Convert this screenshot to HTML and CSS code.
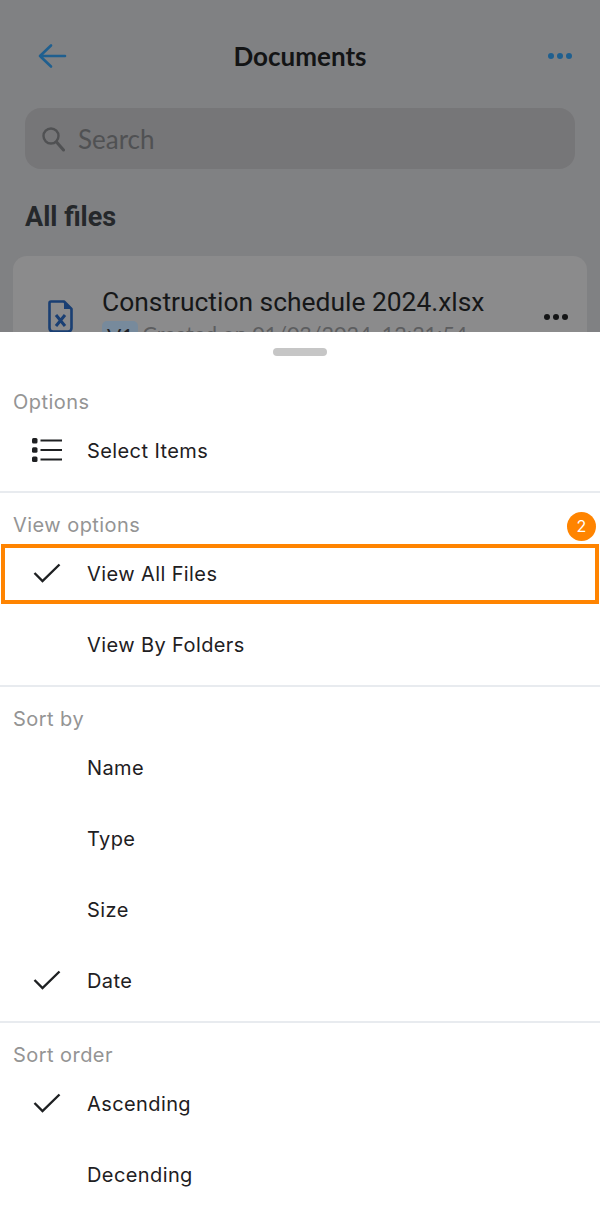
FILE: index.html
```html
<!DOCTYPE html>
<html lang="en">
<head>
<meta charset="utf-8">
<title>Documents</title>
<link rel="stylesheet" href="styles.css">
</head>
<body>
<div class="page">
  <div class="behind">
    <header class="topbar">
      <svg class="back" width="30" height="26" viewBox="0 0 30 26"><path d="M14 2.500 L3 13 L14 23.500 M3 13 H28" fill="none" stroke="#1f5f8f" stroke-width="2.600" stroke-linecap="round" stroke-linejoin="round"/></svg>
      <h1 class="title">Documents</h1>
      <svg class="more" width="26" height="8" viewBox="0 0 26 8"><circle cx="4" cy="4" r="3" fill="#1f5f8f"/><circle cx="13" cy="4" r="3" fill="#1f5f8f"/><circle cx="22" cy="4" r="3" fill="#1f5f8f"/></svg>
    </header>
    <div class="search">
      <svg width="24" height="26" viewBox="0 0 24 26"><circle cx="10" cy="10" r="7.500" fill="none" stroke="#505153" stroke-width="2.400"/><path d="M15.500 16 L22.500 24" stroke="#505153" stroke-width="3" stroke-linecap="round"/></svg>
      <span class="search-text">Search</span>
    </div>
    <h2 class="all-files">All files</h2>
    <div class="file-card">
      <svg class="file-icon" width="25" height="33" viewBox="0 0 25 33"><path d="M3 1.500 H16 L23.500 9 V28 Q23.500 31.500 20 31.500 H5 Q1.500 31.500 1.500 28 V3 Q1.500 1.500 3 1.500 Z" fill="none" stroke="#1a3f73" stroke-width="2.600" stroke-linejoin="round"/><path d="M16 1.500 V9 H23.500 Z" fill="#1a3f73"/><path d="M8 15 L17 26 M17 15 L8 26" stroke="#1a3f73" stroke-width="3"/></svg>
      <div class="file-info">
        <div class="file-name">Construction schedule 2024.xlsx</div>
        <div class="file-meta"><span class="version">V1</span><span class="created">Created on 01/03/2024, 12:21:54</span></div>
      </div>
      <svg class="file-more" width="26" height="8" viewBox="0 0 26 8"><circle cx="4" cy="4" r="3" fill="#141516"/><circle cx="13" cy="4" r="3" fill="#141516"/><circle cx="22" cy="4" r="3" fill="#141516"/></svg>
    </div>
  </div>

  <div class="sheet">
    <div class="handle-zone"><div class="handle"></div></div>

    <section class="group group-first">
      <h3 class="group-title">Options</h3>
      <div class="row">
        <span class="row-icon">
          <svg width="32" height="26" viewBox="0 0 32 26"><rect x="1" y="1" width="5.500" height="5.500" rx="1.500" fill="#1e2022"/><rect x="1" y="10.250" width="5.500" height="5.500" rx="1.500" fill="#1e2022"/><rect x="1" y="19.500" width="5.500" height="5.500" rx="1.500" fill="#1e2022"/><path d="M9.500 3.500 H31 M9.500 13 H31 M9.500 22.500 H31" stroke="#1e2022" stroke-width="2.200"/></svg>
        </span>
        <span class="row-label">Select Items</span>
      </div>
    </section>

    <section class="group">
      <h3 class="group-title">View options</h3>
      <div class="row">
        <span class="row-icon"><svg class="check" width="28" height="20" viewBox="0 0 28 20"><path d="M1.500 10 L9.500 18 L26.500 1.500" fill="none" stroke="#1e2022" stroke-width="2.400"/></svg></span>
        <span class="row-label">View All Files</span>
      </div>
      <div class="row"><span class="row-icon"></span><span class="row-label">View By Folders</span></div>
      <div class="callout"></div>
      <div class="badge">2</div>
    </section>

    <section class="group">
      <h3 class="group-title">Sort by</h3>
      <div class="row"><span class="row-icon"></span><span class="row-label">Name</span></div>
      <div class="row"><span class="row-icon"></span><span class="row-label">Type</span></div>
      <div class="row"><span class="row-icon"></span><span class="row-label">Size</span></div>
      <div class="row">
        <span class="row-icon"><svg class="check" width="28" height="20" viewBox="0 0 28 20"><path d="M1.500 10 L9.500 18 L26.500 1.500" fill="none" stroke="#1e2022" stroke-width="2.400"/></svg></span>
        <span class="row-label">Date</span>
      </div>
    </section>

    <section class="group group-last">
      <h3 class="group-title">Sort order</h3>
      <div class="row">
        <span class="row-icon"><svg class="check" width="28" height="20" viewBox="0 0 28 20"><path d="M1.500 10 L9.500 18 L26.500 1.500" fill="none" stroke="#1e2022" stroke-width="2.400"/></svg></span>
        <span class="row-label">Ascending</span>
      </div>
      <div class="row"><span class="row-icon"></span><span class="row-label">Decending</span></div>
    </section>
  </div>
</div>
</body>
</html>
```
FILE: styles.css
```css
* { box-sizing: border-box; }
html, body { margin: 0; padding: 0; }
body { width: 600px; height: 1221px; overflow: hidden; background: #fff; font-family: "Inter", sans-serif; }
.page { display: flex; flex-direction: column; height: 1221px; }

.behind { height: 332px; flex: none; overflow: hidden; background: #808183; font-family: "Lato", sans-serif; padding: 0 25px; }
.topbar { display: flex; align-items: center; justify-content: space-between; height: 36px; margin-top: 38px; padding: 0 2px 0 12px; position: relative; }
.title { position: absolute; left: 0; right: 0; margin: 0; text-align: center; font-size: 26px; font-weight: 700; color: #131415; line-height: 36px; }
.search { height: 61px; margin-top: 34px; background: #767678; border-radius: 16px; display: flex; align-items: center; gap: 13px; padding: 0 0 0 16px; }
.search-text { font-size: 26px; color: #505153; }
.all-files { margin: 29px 0 0; font-size: 27px; line-height: 38px; font-weight: 700; color: #25282b; font-family: "Roboto", sans-serif; }
.file-card { margin: 20px -12px 0; height: 110px; background: #8b8b8c; border-radius: 14px; display: flex; align-items: flex-start; padding: 29px 0 0 0; position: relative; }
.file-icon { margin: 15px 0 0 35px; flex: none; }
.file-info { margin-left: 29px; flex: 1; }
.file-name { font-family: "Roboto", sans-serif; font-size: 26.400px; line-height: 34px; color: #161718; }
.file-meta { display: flex; align-items: flex-start; gap: 4px; margin-top: 2px; }
.version { background: #778a9c; border-radius: 5px; padding: 0 5px; font-size: 21px; line-height: 30px; color: #1f2225; }
.created { font-size: 21.500px; line-height: 27px; color: #5c5d5f; }
.file-more { margin: 28px 18px 0 0; flex: none; }

.sheet { flex: 1; background: #fff; }
.handle-zone { height: 58px; padding-top: 16px; }
.handle { width: 54px; height: 8px; margin: 0 auto; border-radius: 4px; background: #c6c6c6; }

.group { position: relative; padding-top: 20px; padding-bottom: 6px; border-bottom: 2px solid #e8ebef; }
.group-first { margin-top: -20px; }
.group-last { border-bottom: 0; }
.group-title { margin: 0; padding-left: 13px; height: 24px; font-size: 20px; line-height: 24px; font-weight: 400; color: #949494; letter-spacing: 0.450px; }
.row { display: flex; align-items: center; height: 71px; padding-left: 31px; }
.row-icon { width: 56px; flex: none; display: flex; align-items: center; }
.check { margin-left: 2px; }
.row-label { font-size: 20px; color: #1e2022; letter-spacing: 0.400px; padding-top: 2px; }

.callout { position: absolute; left: 1px; right: 1px; top: 51px; height: 60px; border: 4px solid #ff8400; }
.badge { position: absolute; right: 4px; top: 19px; width: 29px; height: 29px; border-radius: 50%; background: #ff8400; color: #fff; font-size: 16px; line-height: 29px; text-align: center; }
```
